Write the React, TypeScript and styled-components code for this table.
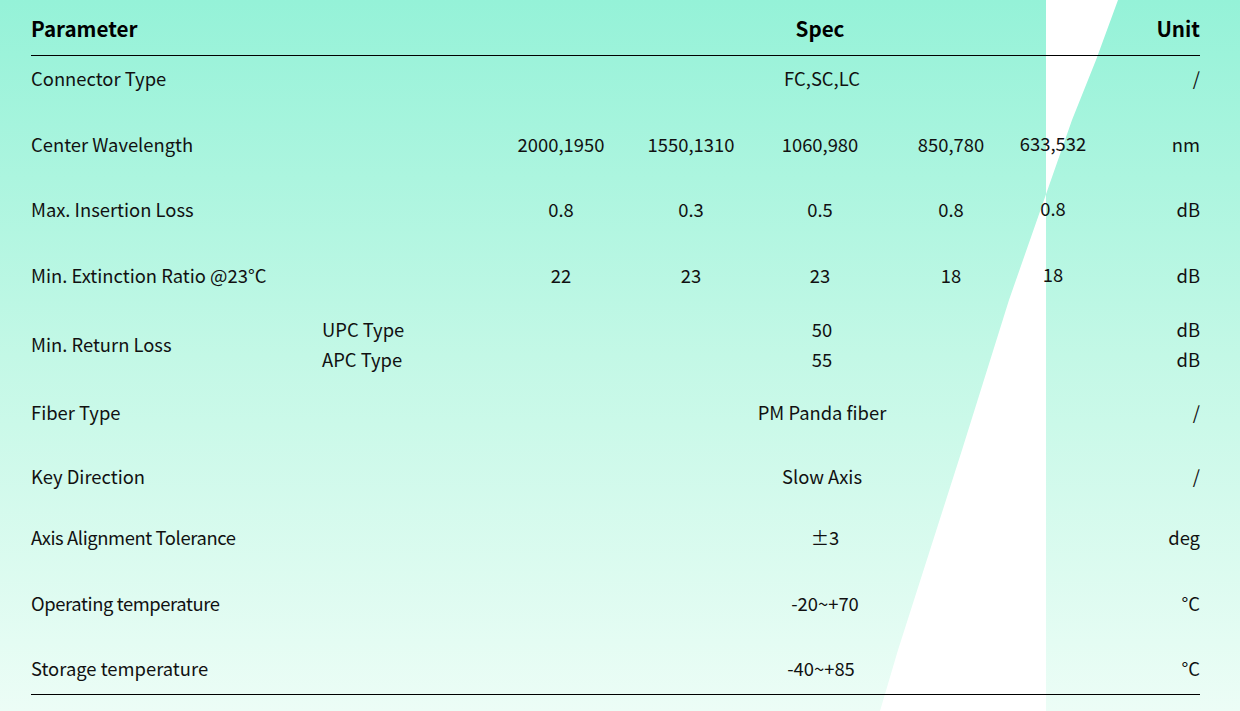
import React from "react";
import styled, { createGlobalStyle } from "styled-components";

const GlobalStyle = createGlobalStyle`
  html, body {
    margin: 0;
    padding: 0;
    overflow: hidden;
  }
  body {
    font-family: "Noto Sans CJK SC", "Noto Sans", sans-serif;
    color: #111;
  }
`;

const COLS = "291px 174px 130px 130px 128px 134px 70px 112px";

const Page = styled.div`
  position: relative;
  width: 1240px;
  height: 711px;
  overflow: hidden;
  background: linear-gradient(180deg, #95f2d8 0%, #c3f8e6 50%, #ecfdf6 100%);
`;

const Stripe = styled.svg`
  position: absolute;
  top: 0;
  left: 0;
  width: 1240px;
  height: 711px;
  z-index: 0;
`;

const Table = styled.div`
  position: relative;
  z-index: 1;
  margin-left: 31px;
  width: 1169px;
  display: flex;
  flex-direction: column;
`;

const HeaderRow = styled.div`
  display: grid;
  grid-template-columns: ${COLS};
  box-sizing: border-box;
  height: 56px;
  align-items: center;
  border-bottom: 1px solid #000;
  font-size: 20.6px;
  font-weight: 700;
  color: #000;
  line-height: 24px;
`;

const Row = styled.div<{ $h: number; $lh?: number; $last?: boolean }>`
  display: grid;
  grid-template-columns: ${COLS};
  grid-auto-rows: ${(p) => p.$lh ?? 24}px;
  align-items: center;
  box-sizing: border-box;
  height: ${(p) => p.$h}px;
  padding-top: 10px;
  font-size: 18.4px;
  line-height: ${(p) => p.$lh ?? 24}px;
  border-bottom: ${(p) => (p.$last ? "1px solid #000" : "none")};
`;

const Label = styled.div<{ $rows?: number; $tight?: boolean }>`
  grid-column: 1;
  grid-row: ${(p) => (p.$rows ? `1 / span ${p.$rows}` : "1")};
  white-space: nowrap;
  letter-spacing: ${(p) => (p.$tight ? "-0.4px" : "normal")};
`;

const Sub = styled.div<{ $row?: number }>`
  grid-column: 2;
  grid-row: ${(p) => p.$row ?? 1};
  white-space: nowrap;
`;

const Val = styled.div<{ $col: number; $lift?: boolean }>`
  grid-column: ${(p) => p.$col};
  grid-row: 1;
  justify-self: center;
  white-space: nowrap;
  transform: ${(p) => (p.$lift ? "translateY(-1px)" : "none")};
`;

const Span = styled.div<{ $row?: number; $nudge?: number }>`
  grid-column: 4 / 7;
  grid-row: ${(p) => p.$row ?? 1};
  justify-self: center;
  white-space: nowrap;
  margin-left: ${(p) => (p.$nudge && p.$nudge > 0 ? p.$nudge * 2 : 0)}px;
  margin-right: ${(p) => (p.$nudge && p.$nudge < 0 ? -p.$nudge * 2 : 0)}px;
`;

const Unit = styled.div<{ $row?: number }>`
  grid-column: 8;
  grid-row: ${(p) => p.$row ?? 1};
  justify-self: end;
  white-space: nowrap;
`;

type MultiRow = {
  label: string;
  values: string[];
  unit: string;
  h: number;
};

const multiRows: MultiRow[] = [
  { label: "Center Wavelength", values: ["2000,1950", "1550,1310", "1060,980", "850,780", "633,532"], unit: "nm", h: 65 },
  { label: "Max. Insertion Loss", values: ["0.8", "0.3", "0.5", "0.8", "0.8"], unit: "dB", h: 66 },
  { label: "Min. Extinction Ratio @23°C", values: ["22", "23", "23", "18", "18"], unit: "dB", h: 51 },
];

type SingleRow = { label: string; spec: string; unit: string; h: number; tight?: boolean; nudge?: number };

const singleRows: SingleRow[] = [
  { label: "Fiber Type", spec: "PM Panda fiber", unit: "/", h: 64 },
  { label: "Key Direction", spec: "Slow Axis", unit: "/", h: 61 },
  { label: "Axis Alignment Tolerance", spec: "±3", unit: "deg", h: 66, tight: true, nudge: 3 },
  { label: "Operating temperature", spec: "-20~+70", unit: "°C", h: 65, tight: true, nudge: 3 },
];

export default function App() {
  return (
    <Page>
      <GlobalStyle />
      <Stripe viewBox="0 0 1240 711" aria-hidden="true">
        <polygon
          points="1046,0 1118,0 1096,60 1072,120 1009,300 962,450 946,500 898,650 880,711 1046,711"
          fill="#ffffff"
        />
      </Stripe>
      <Table>
        <HeaderRow>
          <Label>Parameter</Label>
          <Span $nudge={-2}>Spec</Span>
          <Unit>Unit</Unit>
        </HeaderRow>

        <Row $h={66}>
          <Label>Connector Type</Label>
          <Span>FC,SC,LC</Span>
          <Unit>/</Unit>
        </Row>

        {multiRows.map((r) => (
          <Row key={r.label} $h={r.h}>
            <Label>{r.label}</Label>
            {r.values.map((v, i) => (
              <Val key={i} $col={3 + i} $lift={i === 4}>
                {v}
              </Val>
            ))}
            <Unit>{r.unit}</Unit>
          </Row>
        ))}

        <Row $h={86} $lh={30}>
          <Label $rows={2}>Min. Return Loss</Label>
          <Sub $row={1}>UPC Type</Sub>
          <Span $row={1}>50</Span>
          <Unit $row={1}>dB</Unit>
          <Sub $row={2}>APC Type</Sub>
          <Span $row={2}>55</Span>
          <Unit $row={2}>dB</Unit>
        </Row>

        {singleRows.map((r) => (
          <Row key={r.label} $h={r.h}>
            <Label $tight={r.tight}>{r.label}</Label>
            <Span $nudge={r.nudge}>{r.spec}</Span>
            <Unit>{r.unit}</Unit>
          </Row>
        ))}

        <Row $h={49} $last>
          <Label>Storage temperature</Label>
          <Span $nudge={-1}>-40~+85</Span>
          <Unit>°C</Unit>
        </Row>
      </Table>
    </Page>
  );
}
